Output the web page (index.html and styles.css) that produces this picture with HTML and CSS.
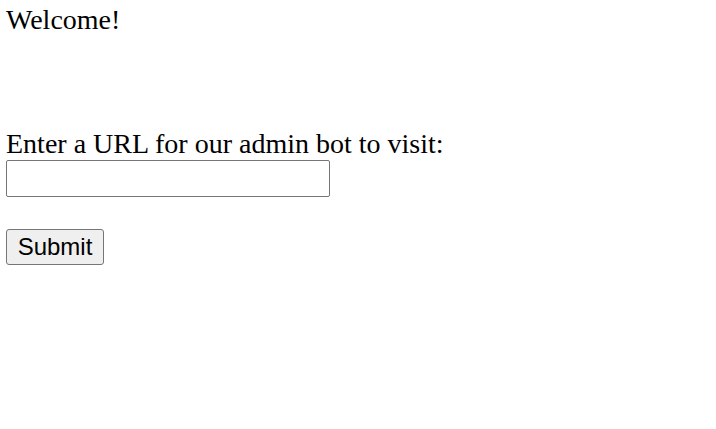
FILE: index.html
```html
<!DOCTYPE html>
<html>
<head>
<meta charset="utf-8">
<link rel="stylesheet" href="styles.css">
</head>
<body>
<div class="page">
  <div class="welcome">Welcome!</div>
  <form class="form">
    <label class="label" for="url">Enter a URL for our admin bot to visit:</label>
    <input class="url" id="url" type="text">
    <button class="submit" type="button">Submit</button>
  </form>
</div>
</body>
</html>
```
FILE: styles.css
```css
html, body {
  margin: 0;
  padding: 0;
  background: #fff;
}
.page {
  padding: 0 6px;
  font-family: "Liberation Serif", "Times New Roman", serif;
  font-size: 28px;
  color: #000;
}
.welcome {
  line-height: 31px;
  padding-top: 4px;
}
.form {
  display: flex;
  flex-direction: column;
  align-items: flex-start;
  margin-top: 93px;
}
.label {
  line-height: 31px;
}
.url {
  box-sizing: border-box;
  width: 324px;
  height: 37px;
  margin: 1px 0 0;
  border: 1px solid #767676;
  border-radius: 2px;
  background: #fff;
  font-size: 22px;
}
.submit {
  box-sizing: border-box;
  margin-top: 32px;
  width: 98px;
  height: 36px;
  padding: 0;
  border: 1px solid #767676;
  border-radius: 3px;
  background: #efefef;
  font-family: "Liberation Sans", Arial, sans-serif;
  font-size: 24px;
  color: #000;
}
```
